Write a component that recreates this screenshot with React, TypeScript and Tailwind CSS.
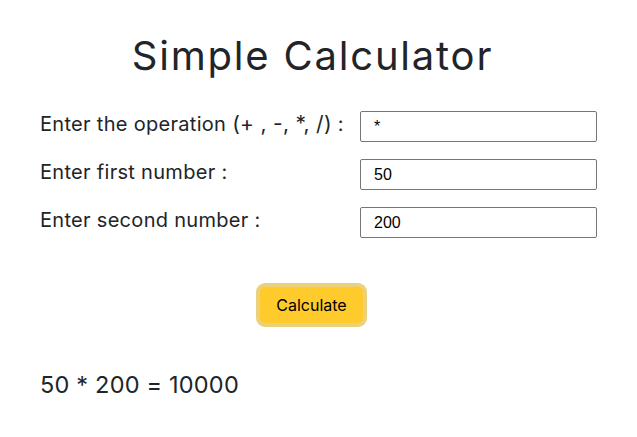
export default function App() {
  const font = { fontFamily: "Inter, 'Open Sans', sans-serif" };
  return (
    <div className="min-h-[437px] w-full bg-white text-[#212529]" style={font}>
      <div className="px-10 pt-[32px]">
        <h1 className="pr-[12px] text-center text-[40px] leading-[48px] font-normal tracking-[1.8px]">Simple Calculator</h1>

        <div className="mt-[31px] flex flex-col gap-[17px]">
          <Row label={<>Enter the operation <span className="text-[21px]">(+ , -, *, /)</span> :</>} value="*" />
          <Row label="Enter first number :" value="50" />
          <Row label="Enter second number :" value="200" />
        </div>

        <div className="mt-[49px] flex justify-center pr-[14px]">
          <button className="h-[36px] w-[103px] rounded-[5px] bg-[#ffca2c] text-[16px] text-black ring-4 ring-[#ecd17b]">
            Calculate
          </button>
        </div>

        <p className="mt-[47px] text-[23.5px] leading-[30px] tracking-[0.2px]">50 * 200 = 10000</p>
      </div>
    </div>
  );
}

function Row({ label, value }: { label: React.ReactNode; value: string }) {
  return (
    <div className="flex items-center justify-between">
      <label className="-mt-[5px] text-[20px] leading-[28px] tracking-[0.3px]">{label}</label>
      <input
        readOnly
        value={value}
        className="h-[31px] w-[237px] rounded-[2px] border border-[#767676] px-[13px] text-[16px] text-black outline-none"
        style={{ fontFamily: "'Liberation Sans', Arial, sans-serif" }}
      />
    </div>
  );
}
